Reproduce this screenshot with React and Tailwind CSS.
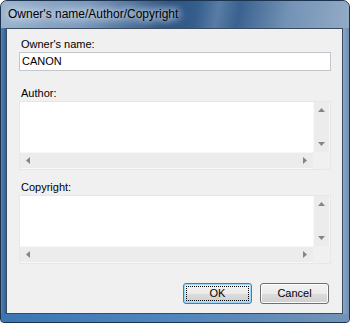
import React from "react";

const font = { fontFamily: '"Liberation Sans", Arial, sans-serif' };

function Tri({ dir }) {
  const pts = {
    up: "0,4 7,4 3.5,0",
    down: "0,0 7,0 3.5,4",
    left: "4,0 4,7 0,3.5",
    right: "0,0 0,7 4,3.5",
  }[dir];
  const vert = dir === "up" || dir === "down";
  return (
    <svg width={vert ? 7 : 4} height={vert ? 4 : 7} viewBox={vert ? "0 0 7 4" : "0 0 4 7"}>
      <polygon points={pts} fill="#858585" />
    </svg>
  );
}

function ScrollBox() {
  return (
    <div className="flex flex-col h-[69px] w-full border border-[#e6e7ec]">
      <div className="flex flex-1 min-h-0">
        <div className="flex-1 bg-white" />
        <div className="w-[17px] bg-[#ececec] border-l border-r border-[#f7f7f7] flex flex-col items-center justify-between py-[6px]">
          <Tri dir="up" />
          <Tri dir="down" />
        </div>
      </div>
      <div className="flex h-[17px]">
        <div className="flex-1 bg-[#ececec] border-t border-b border-[#f7f7f7] flex items-center justify-between px-[6px]">
          <Tri dir="left" />
          <Tri dir="right" />
        </div>
        <div className="w-[17px] bg-[#f0f0f0]" />
      </div>
    </div>
  );
}

export default function App() {
  return (
    <div className="w-[350px] h-[323px] bg-white" style={font}>
      <div className="w-full h-full rounded-t-[7px] rounded-b-[4px] border border-[#1c3350] flex flex-col overflow-hidden bg-[linear-gradient(180deg,#6a8bb0_0%,#36679c_50%,#4b82bb_100%)]">
        <div className="h-[27px] flex items-center pl-[7px] bg-[linear-gradient(100deg,#9bb3cd_0%,#7897ba_25%,#2a5282_48%,#355e8d_56%,#587ca4_62%,#3a6290_68%,#7392b5_82%,#93abc6_100%)]">
          <span className="text-[12px] text-black leading-[15px] [text-shadow:0_0_6px_#dce6f0,0_0_10px_#dce6f0,0_0_14px_#dce6f0]">
            Owner's name/Author/Copyright
          </span>
        </div>
        <div className="flex flex-1">
          <div className="w-[5px] bg-[linear-gradient(90deg,#5a82ad,#2d5f96)]" />
          <div className="flex-1 border border-[#3b4c60] bg-[#f0f0f0] flex flex-col pl-[12px] pr-[11px] text-[11px] text-black">
            <div className="mt-[8px] h-[15px] leading-[15px] ml-[2px]">Owner's name:</div>
            <div className="h-[19px] bg-white border border-[#c4c6cc] flex items-center pl-[2px] leading-[15px]">CANON</div>
            <div className="mt-[15px] h-[15px] leading-[15px] ml-[2px]">Author:</div>
            <ScrollBox />
            <div className="mt-[10px] h-[15px] leading-[15px] ml-[2px]">Copyright:</div>
            <ScrollBox />
            <div className="mt-[19px] flex justify-end gap-[8px] pr-[2px]">
              <button className="w-[69px] h-[21px] rounded-[3px] border border-[#3c7fb1] shadow-[inset_0_0_0_1px_#9fd6f7] bg-[linear-gradient(180deg,#f2f2f2_0%,#ebebeb_50%,#dddddd_50%,#cfcfcf_100%)] p-[2px] flex">
                <span className="flex-1 border border-dotted border-black flex items-center justify-center text-[11px] leading-[13px]">OK</span>
              </button>
              <button className="w-[69px] h-[21px] rounded-[3px] border border-[#707070] shadow-[inset_0_0_0_1px_#fcfcfc] bg-[linear-gradient(180deg,#f2f2f2_0%,#ebebeb_50%,#dddddd_50%,#cfcfcf_100%)] flex items-center justify-center text-[11px]">
                Cancel
              </button>
            </div>
          </div>
          <div className="w-[6px] bg-[linear-gradient(90deg,#8aa5c2,#6f8fb3)]" />
        </div>
        <div className="h-[8px] bg-[linear-gradient(90deg,#3b76b3,#4f86bd_50%,#7393b5)]" />
      </div>
    </div>
  );
}
